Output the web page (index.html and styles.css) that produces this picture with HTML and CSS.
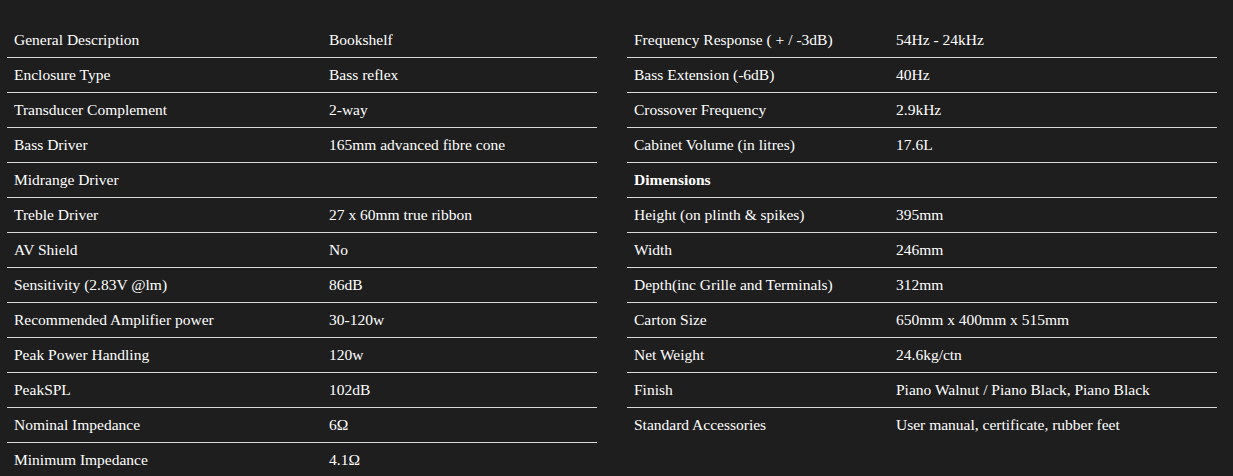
FILE: index.html
```html
<!DOCTYPE html>
<html>
<head>
<meta charset="utf-8">
<link rel="stylesheet" href="styles.css">
</head>
<body>
<div class="specs">
  <table class="spec-table spec-left">
    <colgroup><col class="c-label"><col></colgroup>
    <tr><td>General Description</td><td>Bookshelf</td></tr>
    <tr><td>Enclosure Type</td><td>Bass reflex</td></tr>
    <tr><td>Transducer Complement</td><td>2-way</td></tr>
    <tr><td>Bass Driver</td><td>165mm advanced fibre cone</td></tr>
    <tr><td>Midrange Driver</td><td></td></tr>
    <tr><td>Treble Driver</td><td>27 x 60mm true ribbon</td></tr>
    <tr><td>AV Shield</td><td>No</td></tr>
    <tr><td>Sensitivity (2.83V @lm)</td><td>86dB</td></tr>
    <tr><td>Recommended Amplifier power</td><td>30-120w</td></tr>
    <tr><td>Peak Power Handling</td><td>120w</td></tr>
    <tr><td>PeakSPL</td><td>102dB</td></tr>
    <tr><td>Nominal Impedance</td><td>6Ω</td></tr>
    <tr><td>Minimum Impedance</td><td>4.1Ω</td></tr>
  </table>
  <table class="spec-table spec-right">
    <colgroup><col class="c-label"><col></colgroup>
    <tr><td>Frequency Response ( + / -3dB)</td><td>54Hz - 24kHz</td></tr>
    <tr><td>Bass Extension (-6dB)</td><td>40Hz</td></tr>
    <tr><td>Crossover Frequency</td><td>2.9kHz</td></tr>
    <tr><td>Cabinet Volume (in litres)</td><td>17.6L</td></tr>
    <tr><td><strong>Dimensions</strong></td><td></td></tr>
    <tr><td>Height (on plinth &amp; spikes)</td><td>395mm</td></tr>
    <tr><td>Width</td><td>246mm</td></tr>
    <tr><td>Depth(inc Grille and Terminals)</td><td>312mm</td></tr>
    <tr><td>Carton Size</td><td>650mm x 400mm x 515mm</td></tr>
    <tr><td>Net Weight</td><td>24.6kg/ctn</td></tr>
    <tr><td>Finish</td><td>Piano Walnut / Piano Black, Piano Black</td></tr>
    <tr><td>Standard Accessories</td><td>User manual, certificate, rubber feet</td></tr>
  </table>
</div>
</body>
</html>
```
FILE: styles.css
```css
html, body {
  margin: 0;
  padding: 0;
  background: #1e1e1e;
}
body {
  color: #ffffff;
  font-family: "Liberation Serif", "Times New Roman", serif;
  font-size: 15.5px;
  overflow: hidden;
  height: 476px;
}
.specs {
  display: flex;
  align-items: flex-start;
  gap: 30px;
  padding: 23px 16px 0 7px;
}
.spec-table {
  width: 590px;
  border-collapse: collapse;
  table-layout: fixed;
}
.spec-left .c-label { width: 315px; }
.spec-right .c-label { width: 262px; }
.spec-table td {
  height: 34px;
  padding: 0 7px;
  vertical-align: middle;
  white-space: nowrap;
  line-height: 18px;
}
.spec-table tr + tr td {
  border-top: 1px solid #d8d8d8;
}
.spec-table strong {
  font-weight: bold;
}
```
